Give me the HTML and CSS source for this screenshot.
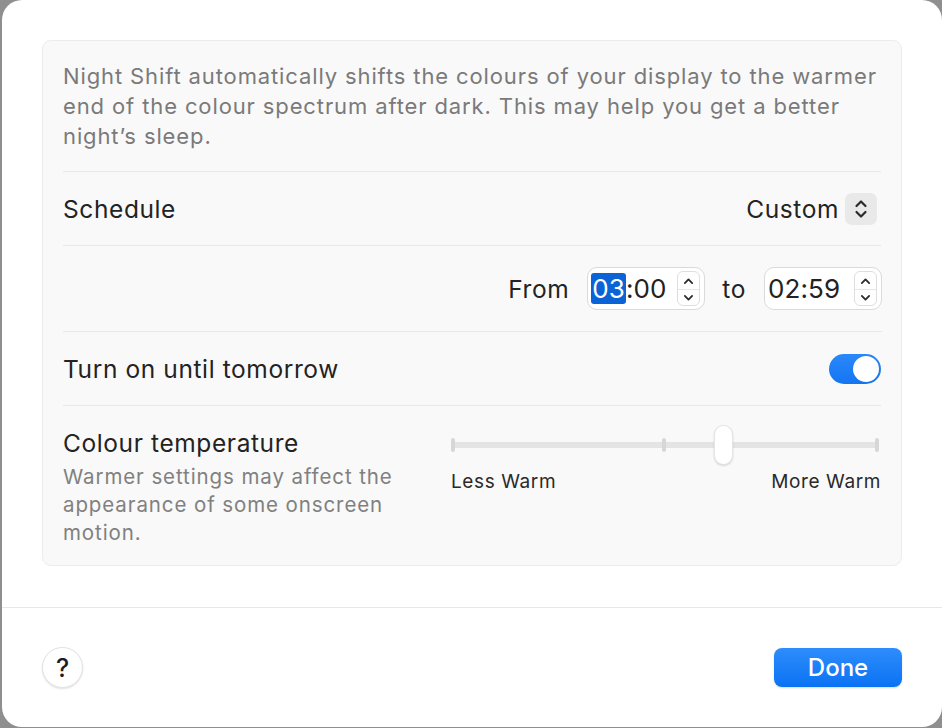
FILE: index.html
```html
<!DOCTYPE html>
<html lang="en">
<head>
<meta charset="utf-8">
<title>Night Shift</title>
<link rel="stylesheet" href="styles.css">
</head>
<body>
<div class="window">
  <div class="content">
    <div class="card">
      <p class="desc">Night Shift automatically shifts the colours of your display to the warmer<br>end of the colour spectrum after dark. This may help you get a better<br>night’s sleep.</p>
      <div class="row row-schedule">
        <span class="label">Schedule</span>
        <div class="popup">
          <span class="popup-text">Custom</span>
          <span class="popup-btn">
            <svg width="32" height="32" viewBox="0 0 32 32"><path d="M11.5 13 L16 8.5 L20.5 13 M11.5 19 L16 23.5 L20.5 19" fill="none" stroke="#2a2a2a" stroke-width="2.2" stroke-linecap="round" stroke-linejoin="round"/></svg>
          </span>
        </div>
      </div>
      <div class="row row-time">
        <span class="label">From</span>
        <div class="timefield">
          <span class="time"><span class="sel">03</span>:00</span>
          <span class="stepper">
            <svg width="23" height="35" viewBox="0 0 23 35"><path d="M7.5 10.5 L11.5 6.5 L15.5 10.5 M7.5 24.5 L11.5 28.5 L15.5 24.5" fill="none" stroke="#2c2c2c" stroke-width="2" stroke-linecap="round" stroke-linejoin="round"/><line x1="0" y1="17.5" x2="23" y2="17.5" stroke="#e4e4e4" stroke-width="1"/></svg>
          </span>
        </div>
        <span class="label">to</span>
        <div class="timefield">
          <span class="time">02:59</span>
          <span class="stepper">
            <svg width="23" height="35" viewBox="0 0 23 35"><path d="M7.5 10.5 L11.5 6.5 L15.5 10.5 M7.5 24.5 L11.5 28.5 L15.5 24.5" fill="none" stroke="#2c2c2c" stroke-width="2" stroke-linecap="round" stroke-linejoin="round"/><line x1="0" y1="17.5" x2="23" y2="17.5" stroke="#e4e4e4" stroke-width="1"/></svg>
          </span>
        </div>
      </div>
      <div class="row row-toggle">
        <span class="label">Turn on until tomorrow</span>
        <span class="toggle"><span class="knob"></span></span>
      </div>
      <div class="row row-temp">
        <div class="temp-text">
          <div class="label">Colour temperature</div>
          <div class="sub">Warmer settings may affect the<br>appearance of some onscreen<br>motion.</div>
        </div>
        <div class="slider">
          <div class="track">
            <span class="tick tick-a"></span>
            <span class="tick tick-b"></span>
            <span class="tick tick-c"></span>
            <span class="thumb"></span>
          </div>
          <div class="slider-labels">
            <span>Less Warm</span>
            <span>More Warm</span>
          </div>
        </div>
      </div>
    </div>
  </div>
  <div class="footer">
    <button class="help">?</button>
    <button class="done">Done</button>
  </div>
</div>
</body>
</html>
```
FILE: styles.css
```css
* { box-sizing: border-box; }
html, body { margin: 0; padding: 0; }
body {
  background: #8f8f8f;
  width: 942px;
  height: 728px;
  overflow: hidden;
  font-family: Inter, "Noto Sans", sans-serif;
  color: #232323;
}
.window {
  margin-left: 2px;
  width: 940px;
  height: 727px;
  background: #ffffff;
  border-radius: 20px;
  display: flex;
  flex-direction: column;
}
.content {
  padding: 40px 40px 41px 40px;
  border-bottom: 1px solid #e7e7e7;
}
.card {
  background: #f9f9f9;
  border: 1px solid #ececec;
  border-radius: 9px;
  padding: 0 20px;
}
.desc {
  margin: 0;
  padding: 20px 0 20px;
  font-size: 22px;
  letter-spacing: 0.88px;
  line-height: 30px;
  color: #7a7a7a;
  white-space: nowrap;
  border-bottom: 1px solid #e8e8e8;
}
.row {
  display: flex;
  align-items: center;
  border-bottom: 1px solid #e8e8e8;
}
.label {
  font-size: 24.5px;
  letter-spacing: 0.6px;
  line-height: 30px;
  color: #232323;
  white-space: nowrap;
}
.row-schedule {
  height: 74px;
  justify-content: space-between;
}
.popup {
  display: flex;
  align-items: center;
  gap: 6px;
  margin-right: 4px;
}
.popup-text {
  font-size: 24.5px;
  letter-spacing: 0.6px;
  color: #232323;
}
.popup-btn {
  width: 32px;
  height: 32px;
  background: #e9e9e9;
  border-radius: 7px;
  display: flex;
}
.row-time {
  height: 86px;
  justify-content: flex-end;
  gap: 17px;
  padding-right: 0;
  margin-right: -1px;
}
.row-time .label { margin-right: 1px; }
.timefield {
  flex: 0 0 118px;
  height: 43px;
  border: 1px solid #dadada;
  border-radius: 10px;
  background: #fff;
  display: flex;
  align-items: center;
  padding: 0 4px 0 3px;
  justify-content: space-between;
}
.time {
  font-size: 26px;
  letter-spacing: 0.1px;
  line-height: 31px;
  color: #222;
  display: flex;
  align-items: center;
}
.sel {
  background: #0b63d6;
  color: #fff;
  border-radius: 3px;
  padding: 0 1px;
}
.stepper {
  flex: 0 0 23px;
  height: 35px;
  border: 1px solid #dedede;
  border-radius: 6px;
  display: flex;
  overflow: hidden;
}
.row-toggle {
  height: 74px;
  justify-content: space-between;
}
.toggle {
  width: 52px;
  height: 30px;
  border-radius: 15px;
  background: linear-gradient(#2b88fa, #1475f2);
  display: flex;
  justify-content: flex-end;
  align-items: center;
  padding: 2px;
}
.knob {
  width: 26px;
  height: 26px;
  border-radius: 50%;
  background: #fff;
  box-shadow: 0 0 1px rgba(0,0,0,0.2);
}
.row-temp {
  border-bottom: none;
  align-items: flex-start;
  justify-content: space-between;
  padding: 22px 0 18px;
}
.sub {
  margin-top: 5px;
  font-size: 20.5px;
  letter-spacing: 0.9px;
  line-height: 28px;
  color: #808080;
  white-space: nowrap;
}
.slider {
  width: 430px;
  padding-top: 14px;
}
.track {
  position: relative;
  height: 6px;
  margin: 0 2px 0 0;
  background: #e4e4e4;
  border-radius: 3px;
}
.tick {
  position: absolute;
  top: -4px;
  width: 4px;
  height: 14px;
  border-radius: 2px;
  background: #d7d7d7;
}
.tick-a { left: 0; }
.tick-b { left: 211px; }
.tick-c { right: 0; }
.thumb {
  position: absolute;
  left: 263px;
  top: -17px;
  width: 19px;
  height: 40px;
  border-radius: 10px;
  background: #fff;
  border: 1px solid rgba(0,0,0,0.1);
  box-shadow: 0 1px 2px rgba(0,0,0,0.15);
}
.slider-labels {
  display: flex;
  justify-content: space-between;
  margin-top: 22px;
  font-size: 19px;
  letter-spacing: 0.6px;
  line-height: 24px;
  color: #2a2a2a;
}
.footer {
  flex: 1;
  display: flex;
  align-items: center;
  justify-content: space-between;
  padding: 0 40px 0 40px;
}
.help {
  width: 41px;
  height: 41px;
  border-radius: 50%;
  background: #fff;
  border: 1px solid #e2e2e2;
  box-shadow: 0 1px 2px rgba(0,0,0,0.12);
  font-family: Inter, sans-serif;
  font-size: 25px;
  font-weight: 500;
  color: #1e1e1e;
  padding: 0;
  display: flex;
  align-items: center;
  justify-content: center;
}
.done {
  width: 128px;
  height: 39px;
  border: none;
  border-radius: 8px;
  background: linear-gradient(#2e8dfc, #0a72f3);
  color: #fff;
  font-family: Inter, sans-serif;
  font-size: 24px;
  font-weight: 500;
  box-shadow: 0 1px 2px rgba(0,0,0,0.15);
  padding: 0;
}
```
